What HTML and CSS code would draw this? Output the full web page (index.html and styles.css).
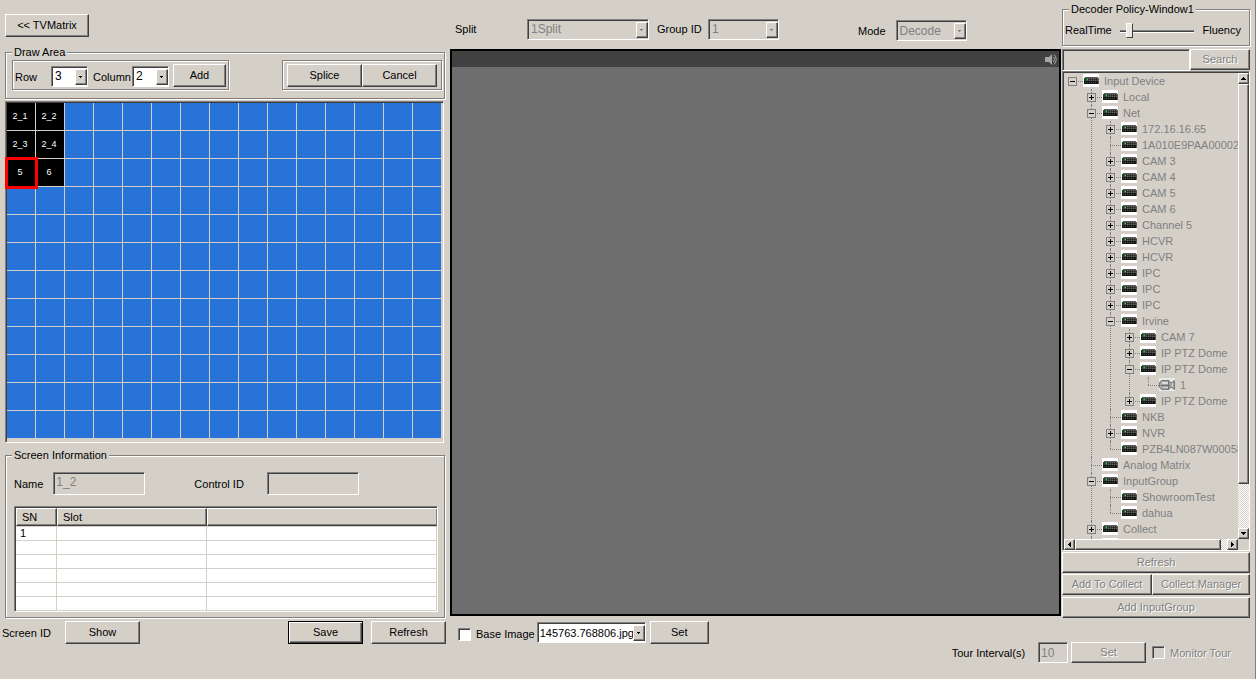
FILE: index.html
```html
<!DOCTYPE html>
<html lang="en">
<head>
<meta charset="utf-8">
<title>TVMatrix</title>
<link rel="stylesheet" href="styles.css">
</head>
<body>
<svg class="defs" aria-hidden="true">
  <symbol id="dev" viewBox="0 0 16 16">
    <path fill="#fff" d="M0 1h16v13H0z"/>
    <path fill="#5a5a5a" d="M2 4h13v1h1v6H2z"/>
    <path fill="#333" d="M1 5h14v3H1z"/>
    <path fill="#161616" d="M1 8h14v3H1z"/>
    <path fill="#6a6a6a" d="M6 5h1v1H6zM8 5h1v1H8zM10 5h1v1h-1zM12 5h1v1h-1zM14 5h1v1h-1zM6 7h1v1H6zM8 7h1v1H8zM10 7h1v1h-1zM12 7h1v1h-1zM14 7h1v1h-1z"/>
    <path fill="#444" d="M2 9h1v1H2zM4 9h1v1H4zM6 9h1v1H6zM8 9h1v1H8zM10 9h1v1h-1zM12 9h1v1h-1z"/>
    <path fill="#1f7a35" d="M3 5h2v3H3z"/>
    <path fill="#2fd04f" d="M4 6h1v1H4z"/>
  </symbol>
  <symbol id="cam" viewBox="0 0 16 16">
    <path fill="#e9e9e9" d="M0 1h16v13H0z"/>
    <path fill="#a4a4a4" stroke="#777" d="M2.500 3.500h7.500l2 2.500 3.500-2.500v9l-3.500-2.500-2 2.500h-7.500l-2-2v-5z"/>
    <path fill="#dcdcdc" d="M3 5h6v2H3z"/>
    <path fill="#6f6f6f" d="M2 8h9v1H2zM9 4h1v8H9z"/>
    <path fill="#cfcfcf" d="M4 10h5v1H4zM13 6h1v4h-1z"/>
  </symbol>
</svg>
<main class="app">
  <section class="left">
    <div class="nav"><button class="btn nav-btn">&lt;&lt; TVMatrix</button></div>
    <fieldset class="group draw">
      <legend>Draw Area</legend>
      <div class="draw-tools">
        <div class="frame">
          <label for="row">Row</label>
          <span class="combo size"><select id="row"><option>3</option></select></span>
          <label for="column">Column</label>
          <span class="combo size"><select id="column"><option>2</option></select></span>
          <button class="btn add">Add</button>
        </div>
        <div class="frame pair"><button class="btn wide">Splice</button><button class="btn wide">Cancel</button></div>
      </div>
    </fieldset>
    <div class="wall">
      <div class="cells">
        <div class="cell r1 c1">2_1</div><div class="cell r1 c2">2_2</div>
        <div class="cell r2 c1">2_3</div><div class="cell r2 c2">2_4</div>
        <div class="cell r3 c1 selected">5</div><div class="cell r3 c2">6</div>
      </div>
    </div>
    <fieldset class="group info">
      <legend>Screen Information</legend>
      <div class="fields">
        <label for="name">Name</label><input id="name" class="box" value="1_2" disabled>
        <label for="control" class="control-label">Control ID</label><input id="control" class="box" disabled>
      </div>
      <div class="list">
        <table>
          <colgroup><col class="col-sn"><col class="col-slot"><col></colgroup>
          <thead><tr><th>SN</th><th>Slot</th><th></th></tr></thead>
          <tbody>
            <tr><td>1</td><td></td><td></td></tr>
            <tr><td></td><td></td><td></td></tr>
            <tr><td></td><td></td><td></td></tr>
            <tr><td></td><td></td><td></td></tr>
            <tr><td></td><td></td><td></td></tr>
            <tr><td></td><td></td><td></td></tr>
          </tbody>
        </table>
      </div>
    </fieldset>
    <div class="screen-actions">
      <span class="screen-id">Screen ID</span>
      <button class="btn wide">Show</button>
      <button class="btn wide default">Save</button>
      <button class="btn wide">Refresh</button>
    </div>
  </section>

  <section class="center">
    <div class="toolbar">
      <label for="split" class="split-label">Split</label>
      <span class="combo off split"><select id="split" disabled><option>1Split</option></select></span>
      <label for="group" class="group-label">Group ID</label>
      <span class="combo off mid"><select id="group" disabled><option>1</option></select></span>
      <span class="mode"><label for="mode">Mode</label>
      <span class="combo off mid"><select id="mode" disabled><option>Decode</option></select></span></span>
    </div>
    <div class="video">
      <div class="video-bar">
        <svg width="12" height="12" viewBox="0 0 12 12" aria-hidden="true"><path fill="#a5a5a5" d="M0 4h2v5H0zM2 4h2l3-3v11L4 9H2z"/><path fill="none" stroke="#a5a5a5" d="M8.500 4q2 2.500 0 5M9 1.500q4.500 5 0 10"/></svg>
      </div>
    </div>
  </section>

  <aside class="right">
    <fieldset class="group policy">
      <legend>Decoder Policy-Window1</legend>
      <div class="policy-row"><label for="policy">RealTime</label><input id="policy" type="range" min="0" max="10" value="1"><span>Fluency</span></div>
    </fieldset>
    <div class="search"><input class="box" aria-label="Search devices" disabled><button class="btn" disabled>Search</button></div>
    <div class="tree">
      <ul class="nodes root">
        <li><div class="node"><button class="tg minus" aria-label="Collapse"></button><svg class="ico"><use href="#dev"/></svg>Input Device</div>
          <ul class="nodes">
            <li><div class="node"><button class="tg" aria-label="Expand"></button><svg class="ico"><use href="#dev"/></svg>Local</div></li>
            <li><div class="node"><button class="tg minus" aria-label="Collapse"></button><svg class="ico"><use href="#dev"/></svg>Net</div>
              <ul class="nodes">
                <li><div class="node"><button class="tg" aria-label="Expand"></button><svg class="ico"><use href="#dev"/></svg>172.16.16.65</div></li>
                <li><div class="node"><svg class="ico"><use href="#dev"/></svg>1A010E9PAA00002</div></li>
                <li><div class="node"><button class="tg" aria-label="Expand"></button><svg class="ico"><use href="#dev"/></svg>CAM 3</div></li>
                <li><div class="node"><button class="tg" aria-label="Expand"></button><svg class="ico"><use href="#dev"/></svg>CAM 4</div></li>
                <li><div class="node"><button class="tg" aria-label="Expand"></button><svg class="ico"><use href="#dev"/></svg>CAM 5</div></li>
                <li><div class="node"><button class="tg" aria-label="Expand"></button><svg class="ico"><use href="#dev"/></svg>CAM 6</div></li>
                <li><div class="node"><button class="tg" aria-label="Expand"></button><svg class="ico"><use href="#dev"/></svg>Channel 5</div></li>
                <li><div class="node"><button class="tg" aria-label="Expand"></button><svg class="ico"><use href="#dev"/></svg>HCVR</div></li>
                <li><div class="node"><button class="tg" aria-label="Expand"></button><svg class="ico"><use href="#dev"/></svg>HCVR</div></li>
                <li><div class="node"><button class="tg" aria-label="Expand"></button><svg class="ico"><use href="#dev"/></svg>IPC</div></li>
                <li><div class="node"><button class="tg" aria-label="Expand"></button><svg class="ico"><use href="#dev"/></svg>IPC</div></li>
                <li><div class="node"><button class="tg" aria-label="Expand"></button><svg class="ico"><use href="#dev"/></svg>IPC</div></li>
                <li><div class="node"><button class="tg minus" aria-label="Collapse"></button><svg class="ico"><use href="#dev"/></svg>Irvine</div>
                  <ul class="nodes">
                    <li><div class="node"><button class="tg" aria-label="Expand"></button><svg class="ico"><use href="#dev"/></svg>CAM 7</div></li>
                    <li><div class="node"><button class="tg" aria-label="Expand"></button><svg class="ico"><use href="#dev"/></svg>IP PTZ Dome</div></li>
                    <li><div class="node"><button class="tg minus" aria-label="Collapse"></button><svg class="ico"><use href="#dev"/></svg>IP PTZ Dome</div>
                      <ul class="nodes">
                        <li><div class="node"><svg class="ico"><use href="#cam"/></svg>1</div></li>
                      </ul>
                    </li>
                    <li><div class="node"><button class="tg" aria-label="Expand"></button><svg class="ico"><use href="#dev"/></svg>IP PTZ Dome</div></li>
                  </ul>
                </li>
                <li><div class="node"><svg class="ico"><use href="#dev"/></svg>NKB</div></li>
                <li><div class="node"><button class="tg" aria-label="Expand"></button><svg class="ico"><use href="#dev"/></svg>NVR</div></li>
                <li><div class="node"><svg class="ico"><use href="#dev"/></svg>PZB4LN087W00058</div></li>
              </ul>
            </li>
            <li><div class="node"><svg class="ico"><use href="#dev"/></svg>Analog Matrix</div></li>
            <li><div class="node"><button class="tg minus" aria-label="Collapse"></button><svg class="ico"><use href="#dev"/></svg>InputGroup</div>
              <ul class="nodes">
                <li><div class="node"><svg class="ico"><use href="#dev"/></svg>ShowroomTest</div></li>
                <li><div class="node"><svg class="ico"><use href="#dev"/></svg>dahua</div></li>
              </ul>
            </li>
            <li><div class="node"><button class="tg" aria-label="Expand"></button><svg class="ico"><use href="#dev"/></svg>Collect</div></li>
            <li><div class="node"><svg class="ico"><use href="#dev"/></svg></div></li>
          </ul>
        </li>
      </ul>
      <div class="scroll vertical">
        <button class="arrow" aria-label="Scroll up"><svg width="5" height="3"><path d="M2 0h1v1h1v1h1v1H0V2h1V1h1z"/></svg></button>
        <div class="thumb"></div><div class="track"></div>
        <button class="arrow" aria-label="Scroll down"><svg width="5" height="3"><path d="M0 0h5v1H4v1H3v1H2V2H1V1H0z"/></svg></button>
      </div>
      <div class="scroll">
        <button class="arrow" aria-label="Scroll left"><svg width="3" height="5"><path d="M3 0v5H2V4H1V3H0V2h1V1h1V0z"/></svg></button>
        <div class="thumb"></div><div class="track"></div>
        <button class="arrow" aria-label="Scroll right"><svg width="3" height="5"><path d="M0 0h1v1h1v1h1v1H2v1H1v1H0z"/></svg></button>
      </div>
    </div>
    <div class="tree-actions">
      <button class="btn full" disabled>Refresh</button>
      <button class="btn" disabled>Add To Collect</button>
      <button class="btn" disabled>Collect Manager</button>
      <button class="btn full last" disabled>Add InputGroup</button>
    </div>
  </aside>

  <footer class="foot">
    <div class="base">
      <input type="checkbox" id="base"><label for="base">Base Image</label>
      <span class="combo file"><select aria-label="Base image file"><option>145763.768806.jpg</option></select></span>
      <button class="btn set">Set</button>
    </div>
    <div class="tour">
      <label for="interval">Tour Interval(s)</label><input id="interval" class="box" value="10" disabled>
      <button class="btn wide" disabled>Set</button>
      <input type="checkbox" id="monitor" disabled><label for="monitor" class="dim">Monitor Tour</label>
    </div>
  </footer>
</main>
</body>
</html>
```
FILE: styles.css
```css
:root {
  --face: #d4d0c8;
  --shade: #808080;
  --dark: #404040;
}

* { box-sizing: border-box; }

body {
  margin: 0;
  background: var(--face);
  color: #000;
  font: 11px/14px "Liberation Sans", Arial, sans-serif;
}

button, input, select { font: inherit; color: inherit; margin: 0; }

.defs { display: none; }

.app {
  display: grid;
  grid-template-columns: 450px minmax(0, 1fr) 188px;
  grid-template-rows: minmax(0, 1fr) auto;
  height: 100vh;
  min-height: 600px;
  min-width: 1100px;
  padding-right: 5px;
  border-right: 1px solid var(--shade);
}

/* Raised and sunken surfaces */
.btn {
  height: 23px;
  padding: 0 0 1px;
  background: var(--face);
  border: 1px solid;
  border-color: #fff var(--dark) var(--dark) #fff;
  border-radius: 0;
  box-shadow: inset -1px -1px 0 var(--shade);
  white-space: nowrap;
}
.btn:disabled, .dim { color: var(--shade); text-shadow: 1px 1px 0 #fff; }
.btn.wide { width: 75px; }
.btn.default { outline: 1px solid #000; outline-offset: -1px; border-color: #000; box-shadow: inset 1px 1px 0 #fff, inset -1px -1px 0 var(--dark), inset -2px -2px 0 var(--shade); }

.box, .combo, .wall, .list, .tree {
  border: 1px solid;
  border-color: var(--shade) #fff #fff var(--shade);
  border-radius: 0;
  box-shadow: inset 1px 1px 0 var(--dark);
}
.box { background-color: var(--face); padding: 0 2px; color: var(--shade); font-size: 12px; }

.combo { position: relative; display: block; height: 21px; background: #fff; }
.combo select {
  appearance: none;
  display: block;
  width: 100%;
  height: 19px;
  padding: 0 12px 0 3px;
  border: 0;
  border-radius: 0;
  background: transparent;
  opacity: 1;
  font-size: 12px;
}
.combo::after {
  content: "";
  position: absolute;
  top: 2px;
  right: 0;
  bottom: 1px;
  width: 10px;
  pointer-events: none;
  border: 1px solid;
  border-color: #fff var(--dark) var(--dark) #fff;
  box-shadow: inset -1px -1px 0 var(--shade);
  background:
    linear-gradient(#000, #000) 3px 6px / 3px 1px no-repeat,
    linear-gradient(#000, #000) 4px 7px / 1px 1px no-repeat,
    var(--face);
}
.combo.off { background: var(--face); color: var(--shade); }
.combo.off::after {
  background:
    linear-gradient(#808080, #808080) 3px 6px / 3px 1px no-repeat,
    linear-gradient(#808080, #808080) 4px 7px / 1px 1px no-repeat,
    var(--face);
}
.combo.size { width: 37px; }
.combo.split { width: 122px; }
.combo.mid { width: 71px; }
.combo.file { width: 109px; }
.combo.file select { padding: 0 0 0 2px; font-size: 11px; }

.group {
  min-width: 0;
  margin: 0;
  padding: 0;
  border: 1px solid var(--shade);
  box-shadow: 1px 1px 0 #fff, inset 1px 1px 0 #fff;
}
.group legend { margin-left: 6px; padding: 0 2px; background: var(--face); }

input[type="checkbox"] {
  appearance: none;
  width: 13px;
  height: 13px;
  background: #fff;
  border: 1px solid;
  border-color: var(--shade) #fff #fff var(--shade);
  box-shadow: inset 1px 1px 0 var(--dark);
}
input[type="checkbox"]:disabled { background: var(--face); }

/* Left column */
.left {
  grid-row: 1 / 3;
  display: flex;
  flex-direction: column;
  padding: 14px 5px 35px;
}
.nav { margin-bottom: 8px; }
.nav-btn { display: block; width: 84px; }
.draw-tools { display: flex; justify-content: space-between; padding: 1px 2px 8px 6px; }
.frame {
  display: flex;
  align-items: center;
  height: 30px;
  padding: 0 2px;
  border: 1px solid var(--shade);
  box-shadow: 1px 1px 0 #fff, inset 1px 1px 0 #fff;
}
.frame label { padding-top: 4px; }
.frame .combo { margin: 2px 5px 0 14px; }
.frame label + .combo + label + .combo { margin: 2px 4px 0 1px; }
.add { width: 53px; }
.pair { padding: 0 4px; }

.wall { flex: 1; min-height: 120px; margin: 2px 1px 5px 0; padding: 1px 1px 3px 1px; }
.cells {
  display: grid;
  grid-template-columns: repeat(15, minmax(0, 1fr));
  grid-template-rows: repeat(12, minmax(0, 1fr));
  height: 100%;
  background:
    linear-gradient(to left, var(--face) 1px, transparent 1px) 0 0 / calc(100% / 15) 100%,
    linear-gradient(to top, var(--face) 1px, transparent 1px) 0 0 / 100% calc(100% / 12),
    #2873d7;
}
.cell {
  display: grid;
  place-items: center;
  padding: 0 2px 2px 0;
  background: #000;
  color: #fff;
  font-size: 9px;
  border: 0 solid var(--face);
  border-width: 0 1px 1px 0;
}
.cell.selected { position: relative; outline: 3px solid #f00; outline-offset: -1px; }
.r1 { grid-row: 1; }
.r2 { grid-row: 2; }
.r3 { grid-row: 3; }
.c1 { grid-column: 1; }
.c2 { grid-column: 2; }

.fields { display: flex; align-items: center; padding: 10px 8px 11px; }
.fields .box { width: 92px; height: 23px; padding-bottom: 4px; }
.fields #name { margin-left: 10px; }
.control-label { margin-left: 49px; }
.fields #control { margin-left: 23px; }
.list { margin: 0 6px 5px 8px; padding: 1px 0 0 1px; background: #fff; }
table { width: 100%; table-layout: fixed; border-collapse: separate; border-spacing: 0; }
.col-sn { width: 41px; }
.col-slot { width: 150px; }
th {
  height: 18px;
  padding: 0 5px;
  text-align: left;
  font-weight: normal;
  line-height: 14px;
  background: var(--face);
  border: 1px solid;
  border-color: #fff var(--dark) var(--dark) #fff;
  box-shadow: inset -1px -1px 0 var(--shade);
}
th:last-child { border-right: 0; }
td { height: 14px; padding: 0 4px; line-height: 13px; border: 0 solid var(--face); border-width: 0 1px 1px 0; }
tbody tr:first-child td { height: 15px; border-top-width: 1px; }

.screen-actions { display: flex; align-items: center; gap: 8px; margin: 3px -1px 0 -3px; }
.screen-id { width: 55px; }
.screen-actions .default { margin-left: auto; }

/* Preview */
.center { display: flex; flex-direction: column; }
.toolbar { display: flex; align-items: center; height: 49px; padding: 9px 5px 0; }
.split-label { width: 72px; }
.group-label { width: 51px; margin-left: 8px; }
.mode { display: flex; align-items: center; gap: 10px; margin: 3px 0 0 79px; }
.video { flex: 1; margin: 0 1px 2px 0; background: #6e6e6e; border: 2px solid #000; }
.video-bar { display: flex; justify-content: flex-end; align-items: center; height: 16px; padding-right: 2px; background: #414141; }

/* Device column */
.right { display: flex; flex-direction: column; padding-top: 2px; }
.policy { margin-bottom: 3px; }
.policy-row { display: flex; align-items: center; height: 29px; padding: 0 8px 2px 2px; }
.policy-row input { flex: 1; min-width: 0; margin: 2px 8px 0; }
input[type="range"] {
  appearance: none;
  height: 18px;
  background: linear-gradient(var(--shade) 1px, var(--dark) 1px 2px, #fff 2px) 0 8px / 100% 3px no-repeat;
}
input[type="range"]::-webkit-slider-thumb {
  appearance: none;
  width: 7px;
  height: 15px;
  background: #e9e7e3;
  border: 1px solid;
  border-color: #fff var(--dark) var(--dark) #fff;
}
.search { display: flex; height: 22px; }
.search .box { flex: 1; min-width: 0; }
.search .btn { width: 60px; height: 21px; }

.tree {
  flex: 1;
  min-height: 0;
  display: grid;
  grid-template-columns: minmax(0, 1fr) 11px;
  grid-template-rows: minmax(0, 1fr) 11px;
  padding: 1px 0 0 1px;
}
.nodes { margin: 0; padding: 0; list-style: none; }
.nodes .nodes { padding-left: 19px; }
.root { overflow: hidden; padding-left: 4px; color: var(--shade); line-height: 16px; }
.nodes li { position: relative; }
.nodes li::before {
  content: "";
  position: absolute;
  left: 4px;
  top: 0;
  bottom: 0;
  border-left: 1px dotted var(--shade);
}
.nodes li:last-child::before { bottom: auto; height: 8px; }
.root > li::before { display: none; }
.node { position: relative; display: flex; align-items: center; height: 16px; padding-left: 36px; white-space: nowrap; }
.node::before {
  content: "";
  position: absolute;
  left: 4px;
  top: 8px;
  width: 11px;
  border-top: 1px dotted var(--shade);
}
.ico { position: absolute; left: 15px; top: 0; width: 16px; height: 16px; }
.tg {
  position: absolute;
  left: 0;
  top: 4px;
  width: 9px;
  height: 9px;
  padding: 0;
  border: 1px solid var(--shade);
  background:
    linear-gradient(#000, #000) 1px 3px / 5px 1px no-repeat,
    linear-gradient(#000, #000) 3px 1px / 1px 5px no-repeat,
    var(--face);
}
.tg.minus { background: linear-gradient(#000, #000) 1px 3px / 5px 1px no-repeat, var(--face); }

.scroll { display: flex; min-width: 0; min-height: 0; }
.scroll.vertical { flex-direction: column; }
.arrow, .thumb {
  background: var(--face);
  border: 1px solid;
  border-color: #fff var(--dark) var(--dark) #fff;
  box-shadow: inset -1px -1px 0 var(--shade);
}
.arrow { display: grid; place-items: center; flex: none; width: 11px; height: 11px; padding: 0 1px 1px 0; }
.thumb { flex: 24; }
.track { flex: 1; background: repeating-conic-gradient(#fff 0 25%, var(--face) 0 50%) 0 0 / 2px 2px; }
.vertical .thumb { flex: 9; }

.tree-actions { display: grid; grid-template-columns: 90px 1fr; gap: 1px 0; padding-top: 1px; }
.tree-actions .btn { height: 21px; }
.tree-actions .full { grid-column: 1 / 3; }
.tree-actions .last { margin-top: 1px; }

/* Bottom controls */
.foot { grid-column: 2 / 4; display: flex; justify-content: space-between; height: 61px; padding: 3px 19px 0 8px; }
.base, .tour { display: flex; align-items: center; height: 23px; }
.base label { margin: 3px 2px 0 5px; }
.base input { margin-top: 3px; }
.set { width: 59px; margin-left: 4px; }
.tour { margin-top: 20px; }
.tour .box { width: 30px; height: 21px; margin: 0 3px 0 13px; }
.tour .wide { height: 21px; }
.tour input[type="checkbox"] { margin: 0 5px 0 6px; }
```
